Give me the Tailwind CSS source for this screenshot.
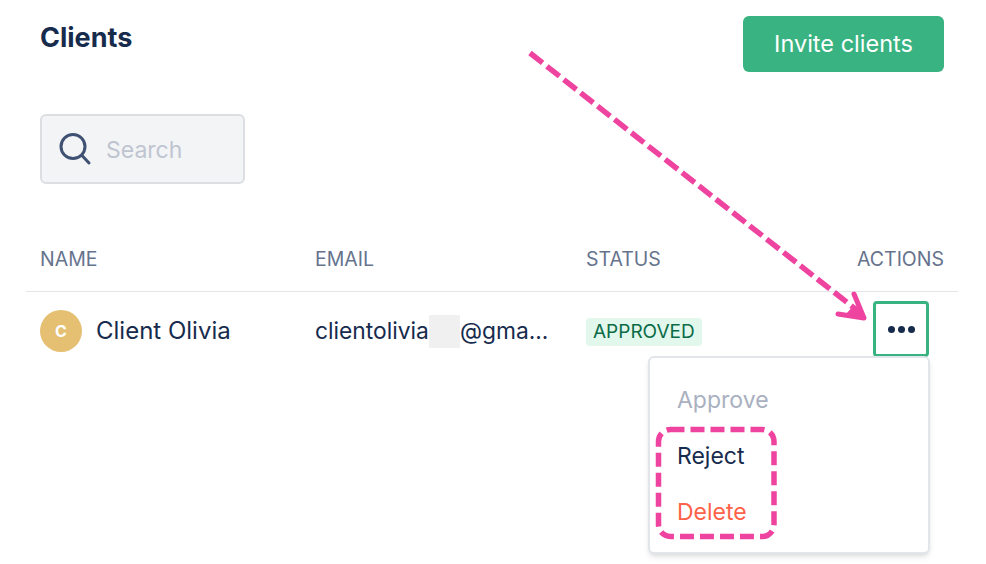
<!DOCTYPE html>
<html lang="en">
<head>
    <meta charset="UTF-8">
    <title>Clients</title>
    <script src="https://cdn.jsdelivr.net/npm/@tailwindcss/browser@4"></script>
</head>
<body class="bg-white text-[#172b4d] font-['Inter',sans-serif]">
    <div class="relative w-[986px] h-[564px] overflow-hidden">
        <!-- header -->
        <div class="flex justify-between pl-10 pr-[42px] pt-4">
            <h1 class="text-[27px] leading-[44px] font-bold text-[#172b4d]">Clients</h1>
            <button class="w-[201px] h-14 bg-[#38b381] text-white text-[23.5px] rounded-md">Invite clients</button>
        </div>

        <!-- search -->
        <div class="ml-10 mt-[42px] w-[205px] h-[70px] flex items-center gap-[13px] pl-[17px] bg-[#f3f4f6] border-2 border-[#dcdee1] rounded-md">
            <svg class="w-[34px] h-[34px]" viewBox="0 0 34 34" fill="none" stroke="#3f5172" stroke-width="3" stroke-linecap="round">
                <circle cx="14" cy="14.5" r="12"/>
                <path d="M23 23.5L30 31"/>
            </svg>
            <span class="text-[23px] text-[#bfc5d0] pt-0.5">Search</span>
        </div>

        <!-- table -->
        <div class="mt-[59px] ml-[26px] mr-[28px] grid grid-cols-[275px_271px_1fr] items-center px-[14px] h-[34px] border-b border-[#e4e6e9] pb-[14px] box-content text-[19.5px] text-[#66738d]">
            <span>NAME</span>
            <span>EMAIL</span>
            <div class="flex justify-between">
                <span>STATUS</span>
                <span>ACTIONS</span>
            </div>
        </div>
        <div class="ml-[26px] mr-[28px] pt-[9px] grid grid-cols-[275px_271px_1fr] items-center px-[14px]">
            <div class="flex items-center gap-[14px] mt-1 text-2xl">
                <div class="w-[42px] h-[42px] rounded-full bg-[#e5bf72] text-white text-base font-bold flex items-center justify-center">C</div>
                <span>Client Olivia</span>
            </div>
            <div class="flex items-center mt-1 text-[22.8px]">
                <span>clientolivia</span>
                <span class="w-[31px] h-[33px] bg-[#f0f0f1]"></span>
                <span>@gma...</span>
            </div>
            <div class="flex justify-between items-center pr-[15px]">
                <span class="h-7 mt-[6px] px-[7px] flex items-center rounded bg-[#e2f8ec] text-[#0b6b47] text-[19px]">APPROVED</span>
                <button class="w-14 h-14 flex items-center justify-center gap-[3px] rounded border-[3px] border-[#38b381] bg-white">
                    <i class="block w-[7px] h-[7px] rounded-full bg-[#172b4d]"></i>
                    <i class="block w-[7px] h-[7px] rounded-full bg-[#172b4d]"></i>
                    <i class="block w-[7px] h-[7px] rounded-full bg-[#172b4d]"></i>
                </button>
            </div>
        </div>

        <!-- dropdown -->
        <div class="absolute left-[648px] top-[356px] w-[282px] h-[198px] bg-white border-2 border-[#e2e5ea] rounded-md shadow-md flex flex-col pl-[27px] pt-[14px] text-[23px]">
            <span class="h-14 flex items-center text-[#a9b0bf]">Approve</span>
            <span class="h-14 flex items-center text-[#172b4d]">Reject</span>
            <span class="h-14 flex items-center text-[#ff6248]">Delete</span>
        </div>

        <!-- annotations -->
        <svg class="absolute inset-0 w-[986px] h-[564px] pointer-events-none" viewBox="0 0 986 564" fill="none" stroke="#ee44a0">
            <path d="M530 53L858 311" stroke-width="5.5" stroke-dasharray="16 5.5"/>
            <path d="M838 314L864 318L854 294" stroke-width="5" stroke-linecap="round" stroke-linejoin="round"/>
            <path d="M854 305L866 319L846 314Z" fill="#ee44a0" stroke="none"/>
            <rect x="658.5" y="429.5" width="115.5" height="107" rx="12" stroke-width="5.5" stroke-dasharray="14 6"/>
        </svg>
    </div>
</body>
</html>
